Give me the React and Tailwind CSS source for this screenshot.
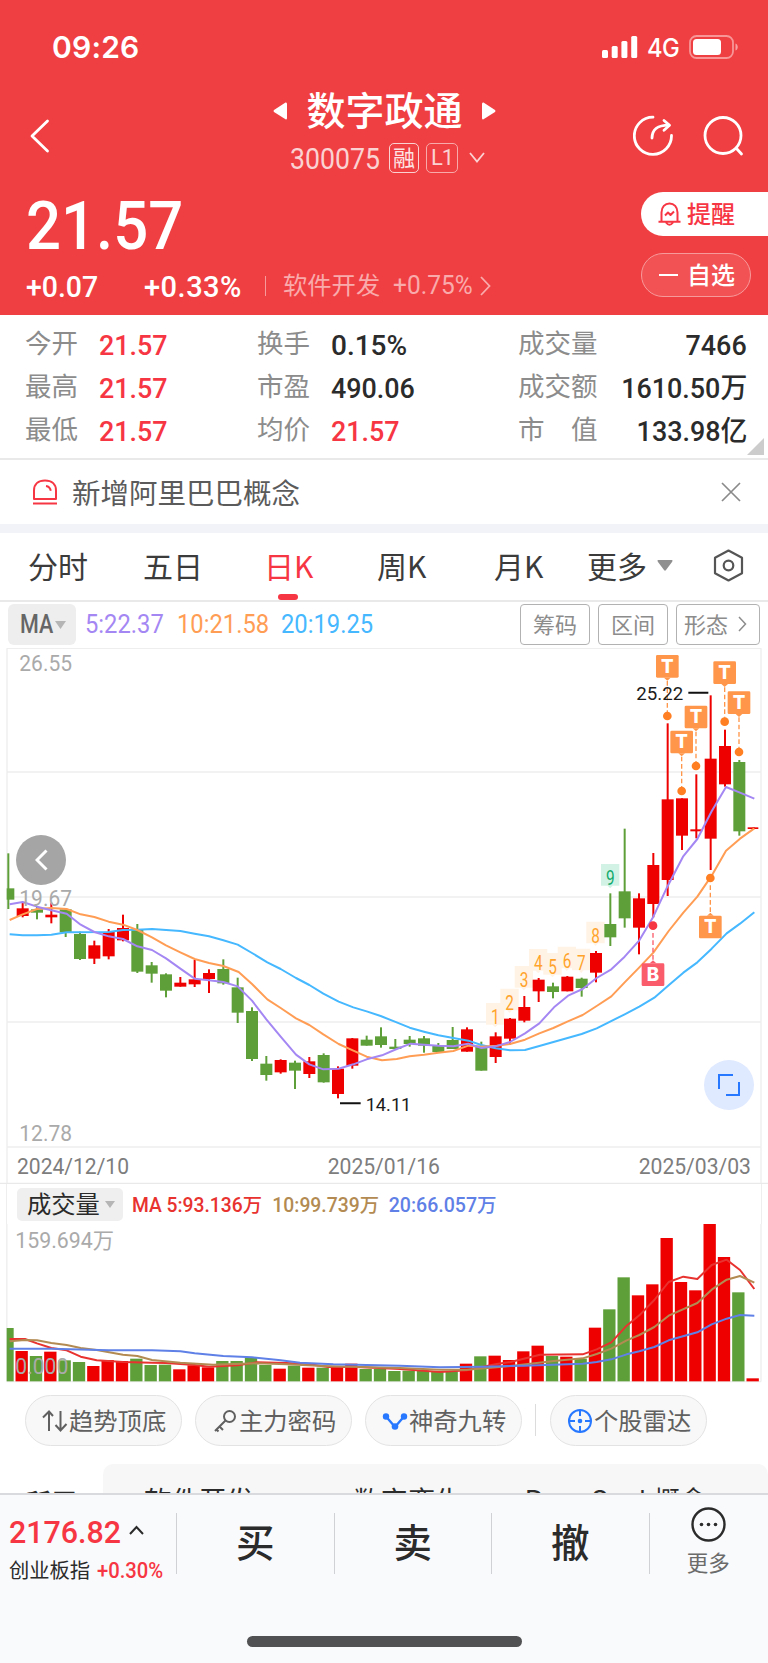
import React from 'react';

// [high, top, bottom, low, up?] of every day, three units are one pixel
const candles = [
  [-80, 25, 59, 87, 0], [68, 85, 108, 112, 1], [80, 88, 98, 118, 0], [68, 104, 112, 130, 1],
  [86, 88, 157, 171, 0], [155, 162, 237, 240, 0], [182, 196, 236, 252, 1], [147, 156, 229, 238, 1],
  [104, 144, 181, 184, 1], [132, 150, 275, 279, 0], [246, 256, 281, 308, 0], [280, 283, 332, 352, 0],
  [291, 308, 320, 320, 1], [240, 298, 313, 321, 1], [268, 279, 297, 339, 1], [238, 267, 310, 314, 0],
  [293, 322, 398, 429, 0], [382, 393, 537, 543, 0], [528, 551, 585, 602, 0], [538, 540, 577, 581, 1],
  [542, 548, 572, 627, 0], [531, 544, 582, 594, 1], [520, 525, 607, 608, 0], [559, 566, 642, 655, 1],
  [474, 475, 557, 566, 1], [467, 479, 497, 497, 0], [442, 469, 495, 503, 0], [477, 500, 507, 507, 0],
  [468, 479, 492, 500, 0], [468, 475, 497, 518, 0], [489, 496, 516, 516, 0], [441, 480, 507, 507, 0],
  [442, 448, 515, 515, 1], [485, 497, 572, 572, 0], [457, 469, 531, 549, 1], [414, 416, 476, 494, 1],
  [348, 381, 422, 427, 1], [294, 299, 334, 366, 1], [308, 319, 336, 355, 0], [288, 290, 334, 334, 1],
  [293, 296, 324, 350, 0], [213, 219, 278, 307, 1], [40, 132, 172, 198, 0], [-154, 34, 115, 143, 0],
  [40, 55, 143, 223, 1], [-81, -45, 72, 112, 1], [-470, -242, 0, 48, 1], [-245, -245, -133, -90, 1],
  [-317, -152, -146, -125, 1], [-554, -364, -124, -30, 1], [-451, -402, -287, -280, 1], [-360, -354, -146, -133, 0],
  [-158, -158, -153, -153, 1],
];

const volumes = [
  444, 513, 528, 515, 541, 546, 558, 540, 543, 536, 555, 554, 568, 556, 562, 543, 543, 534, 555, 566, 557, 563, 563, 564, 551, 567, 567,
  573, 572, 572, 576, 574, 551, 529, 527, 540, 514, 497, 528, 530, 536, 443, 388, 292, 346, 313, 174, 306, 331, 129, 231, 337, 595,
];

const maLines = [
  ['#45b8ff', '29,163 68,166 111,166 154,164 200,157 326,156 369,150 412,149 456,147 541,153 584,161 627,169 670,181 713,194 756,219 802,247 842,267 888,294 928,315 970,341 1016,365 1060,382 1100,394 1142,408 1190,427 1229,443 1272,455 1315,466 1360,474 1405,482 1444,495 1487,505 1530,511 1575,510 1618,498 1745,462 1790,445 1874,403 1918,380 1963,353 2006,316 2050,278 2092,247 2135,206 2180,160 2220,131 2263,97'],
  ['#ff9d55', '29,120 68,103 111,87 154,84 200,87 242,103 283,111 326,125 369,134 412,150 456,172 498,196 541,217 584,237 627,249 670,258 716,276 756,312 802,358 842,384 888,415 928,435 970,463 1016,492 1060,512 1100,530 1146,541 1190,537 1229,529 1272,524 1315,518 1360,513 1405,497 1444,500 1490,497 1530,492 1575,479 1618,460 1660,444 1702,425 1748,405 1790,378 1834,349 1874,307 1918,262 1960,218 2006,153 2050,98 2092,50 2135,-13 2178,-88 2220,-124 2263,-155'],
  ['#a487f3', '29,73 68,66 111,80 154,91 200,101 242,134 283,156 326,169 369,177 412,199 456,210 498,235 541,266 584,296 627,301 670,306 713,319 756,362 799,418 842,470 888,524 928,553 970,568 1016,566 1060,553 1100,538 1146,526 1190,507 1232,491 1272,494 1315,497 1360,499 1405,491 1444,504 1487,499 1530,486 1575,460 1618,430 1662,382 1706,346 1748,327 1790,294 1834,268 1874,230 1918,181 1960,110 2002,20 2049,-70 2092,-123 2135,-206 2178,-279 2220,-262 2263,-244'],
];

const volumeLines = [
  ['#e8322f', '29,477 75,477 111,490 154,504 200,511 242,530 290,541 369,546 456,548 498,549 584,555 627,560 713,556 770,547 860,549 928,553 985,561 1070,561 1200,567 1320,576 1400,571 1490,552 1532,546 1620,524 1748,523 1790,508 1834,487 1880,437 1918,406 1963,360 2006,306 2050,290 2092,297 2135,255 2180,239 2220,270 2263,327'],
  ['#b38b52', '29,484 75,480 111,481 154,489 200,495 242,504 290,510 369,524 412,528 456,540 541,548 640,554 770,550 860,553 970,558 1200,564 1320,569 1400,569 1490,562 1532,558 1662,543 1748,535 1790,522 1834,506 1880,481 1918,465 1963,441 2006,407 2092,369 2135,329 2180,299 2220,288 2263,308'],
  ['#5f80e6', '29,506 154,506 326,511 456,511 541,514 584,520 670,528 756,532 842,541 900,548 1000,553 1200,557 1320,562 1450,560 1570,557 1748,551 1790,546 1834,538 1880,523 1918,514 1963,501 2006,481 2092,457 2135,433 2180,416 2220,405 2263,407'],
];

// x, top of the tag, dot
const tags = [
  [2002, -675, -492, 'T'], [2174, -656, -475, 'T'], [2217, -566, -384, 'T'], [2088, -523, -342, 'T'],
  [2045, -448, -267, 'T'], [2131, 107, -6, 'T'], [1959, 250, 137, 'B'],
];

// nine-turn counter
const turns = [
  [1486, 369], [1529, 326], [1572, 258], [1615, 207], [1658, 219], [1701, 200], [1744, 206], [1787, 125], [1831, -48],
];

const stats = [
  ['今开', '21.57', 'text-[#f73643]', '换手', '0.15%', 'text-[#2b2b2b]', '成交量', '7466'],
  ['最高', '21.57', 'text-[#f73643]', '市盈', '490.06', 'text-[#2b2b2b]', '成交额', '1610.50万'],
  ['最低', '21.57', 'text-[#f73643]', '均价', '21.57', 'text-[#f73643]', '市　值', '133.98亿'],
];

const num = "font-['Roboto','Noto_Sans_CJK_SC',sans-serif] whitespace-nowrap ";

const Label = ({ x, y, size, width, fill, children, weight = 400 }) => (
  <text x={x} y={y} fontSize={size} textLength={width} lengthAdjust="spacingAndGlyphs" fill={fill} fontWeight={weight}
    fontFamily="Roboto, 'Noto Sans CJK SC', sans-serif">{children}</text>
);

const Header = () => (
  <header className="h-[315px] bg-[#f03f42] text-white">
    <div className="flex h-[94px] items-center pl-[52px] pr-[29px]">
      <span className="font-['Inter',sans-serif] text-[30px] font-semibold leading-none tracking-[0.2px]">09:26</span>
      <svg className="ml-auto" width="36" height="22" viewBox="0 0 36 22" fill="white">
        <rect x="0" y="14" width="6" height="8" rx="1.5" />
        <rect x="9.7" y="10" width="6" height="12" rx="1.5" />
        <rect x="19.4" y="5" width="6" height="17" rx="1.5" />
        <rect x="29.2" y="0" width="6" height="22" rx="1.5" />
      </svg>
      <span className="ml-[9px] w-[42px] origin-left scale-x-95 pt-[2px] font-['Inter',sans-serif] text-[25px] font-medium leading-none tracking-[-0.5px]">4G</span>
      <svg width="50" height="24" viewBox="0 0 50 24" fill="none">
        <rect x="1" y="1" width="43" height="22" rx="6.5" stroke="white" strokeOpacity=".45" strokeWidth="1.8" />
        <rect x="4" y="4" width="28" height="16" rx="3.5" fill="white" />
        <path d="M46.5 8.5c3 1 3 6 0 7z" fill="white" fillOpacity=".5" />
      </svg>
    </div>
    <div className="flex h-[84px] items-start">
      <svg className="ml-[29px] mt-[25px]" width="22" height="34" viewBox="0 0 22 34" fill="none" stroke="white" strokeWidth="2.8" strokeLinecap="round" strokeLinejoin="round">
        <path d="M18.500 2 3 17l15.500 15" />
      </svg>
      <div className="ml-[222px] flex w-[223px] flex-col">
        <div className="-mt-[5px] flex h-[44px] items-center justify-between">
          <svg width="14" height="18" viewBox="0 0 14 18" fill="white"><path d="M12.500 .5Q14 0 14 2v14q0 2-1.500 1.200L1 10Q0 9 1 8z" /></svg>
          <h1 className="-mt-[6px] text-[39px] font-medium leading-none">数字政通</h1>
          <svg width="14" height="18" viewBox="0 0 14 18" fill="white"><path d="M1.500 .5Q0 0 0 2v14q0 2 1.500 1.200L13 10Q14 9 13 8z" /></svg>
        </div>
        <div className="mt-[9px] flex h-[31px] items-center pl-[17px]">
          <span className={num + 'w-[99px] origin-left scale-x-92 pt-[4px] text-[29px] leading-none text-[#fbd2d2]'}>300075</span>
          <span className="flex h-[30px] w-[30px] items-center justify-center rounded-[5px] border-[1.5px] border-[#fbd2d2] text-[22px] leading-none text-[#fde3e3]"><span className="-mt-[3px]">融</span></span>
          <span className="ml-[7px] flex h-[30px] w-[32px] items-center justify-center rounded-[5px] border-[1.5px] border-[#f8a9a9] font-['Roboto'] text-[22px] leading-none tracking-[-1px] text-[#fbd2d2]">L1</span>
          <svg className="ml-[11px]" width="16" height="11" viewBox="0 0 16 11" fill="none" stroke="#fbd2d2" strokeWidth="1.8"><path d="m1 1 7 8.500L15 1" /></svg>
        </div>
      </div>
      <svg className="ml-auto mt-[21px]" width="42" height="42" viewBox="0 0 42 42" fill="none" stroke="white" strokeWidth="2.800" strokeLinecap="round" strokeLinejoin="round">
        <path d="M20 2.200A18.600 18.600 0 1 0 38.500 20.500" />
        <path d="M19 23c.2-8 4-12.800 17-12.800" />
        <path d="m31 5.500 5.500 4.800-5.500 5" />
      </svg>
      <svg className="ml-[28px] mr-[23px] mt-[21px]" width="42" height="42" viewBox="0 0 42 42" fill="none" stroke="white" strokeWidth="2.800" strokeLinecap="round">
        <circle cx="20" cy="20.500" r="18" />
        <path d="m33.500 33.500 5 5.500" />
      </svg>
    </div>
    <div className="flex h-[137px]">
      <div className="pl-[26px] pt-[14px]">
        <div className={num + 'h-[68px] w-[170px] origin-left scale-x-92 text-[67px] font-medium leading-[68px]'}>21.57</div>
        <div className="mt-[9px] flex h-[34px] items-center">
          <span className={num + 'w-[118px] origin-left scale-x-98 pt-[3px] text-[29px] font-medium'}>+0.07</span>
          <span className={num + 'w-[121px] pt-[3px] text-[29px] font-medium tracking-[0.5px]'}>+0.33%</span>
          <span className="h-[20px] w-px bg-[#f79a9b]" />
          <span className="-mt-[3px] ml-[17px] text-[24.300px] text-[#f9abac]">软件开发</span>
          <span className={num + 'ml-[13px] w-[87px] origin-left scale-x-98 text-[25px] text-[#f9abac]'}>+0.75%</span>
          <svg width="11" height="20" viewBox="0 0 11 20" fill="none" stroke="#f9abac" strokeWidth="1.800"><path d="m1 1 8.500 9L1 19" /></svg>
        </div>
      </div>
      <div className="ml-auto flex w-[127px] flex-col pt-[14px]">
        <div className="flex h-[44px] items-center rounded-l-full bg-white pl-[17px] text-[#f73643]">
          <svg width="23" height="25" viewBox="0 0 23 25" fill="none" stroke="#f73643" strokeWidth="2" strokeLinejoin="round">
            <path d="M3.500 19.500V10.500C3.500 5 7 1.500 11.500 1.500S19.500 5 19.500 10.500v9" />
            <path d="M.5 19.700h22M8 20.500q3.500 4.500 7 0M7 13.500l3-3 2.500 2.500 3.500-3.500" />
          </svg>
          <span className="-mt-[2px] ml-[6px] text-[24px] font-medium">提醒</span>
        </div>
        <div className="mt-[17px] flex h-[44px] w-[110px] items-center rounded-full border-[1.5px] border-[#f79a9b] bg-[#f25254] pl-[17px]">
          <span className="h-[2px] w-[19px] bg-white" />
          <span className="-mt-[2px] ml-[9px] text-[24px] font-medium">自选</span>
        </div>
      </div>
    </div>
  </header>
);

const Stats = () => (
  <section className="flex h-[145px] flex-col border-b-2 border-[#e9e9e9] pt-[7px]">
    {stats.map((row, ind) => (
      <div key={ind} className="flex h-[43px] items-center text-[26.500px] text-[#8c8c8c]">
        <span className="-mt-[3px] ml-[25px] w-[74px]">{row[0]}</span>
        <span className={num + 'w-[158px] origin-left scale-x-96 pt-[4px] text-[28px] font-medium ' + row[2]}>{row[1]}</span>
        <span className="-mt-[3px] w-[74px]">{row[3]}</span>
        <span className={num + 'w-[187px] origin-left pt-[4px] text-[28px] font-medium ' + (ind === 0 ? '' : 'scale-x-96 ') + row[5]}>{row[4]}</span>
        <span className="-mt-[3px]">{row[6]}</span>
        <span className={num + 'ml-auto mr-[21px] origin-right scale-x-96 pt-[4px] text-[28px] font-medium text-[#2b2b2b]'}>{row[7]}</span>
      </div>
    ))}
    <svg className="-mt-[13px] ml-auto mr-[4px]" width="17" height="17" viewBox="0 0 17 17" fill="#ccc"><path d="M17 0v17H0z" /></svg>
  </section>
);

const Notice = () => (
  <section className="flex h-[64px] items-center pl-[32px] pr-[27px]">
    <svg width="26" height="26" viewBox="0 0 26 26" fill="none" stroke="#f73643" strokeWidth="2">
      <path d="M2 20V11.500C2 5 6.500 1.500 13 1.500S24 5 24 11.500V20z" strokeLinejoin="round" />
      <path d="M1 24.500h24M14 7q4 .5 4.800 4.800" />
    </svg>
    <span className="ml-[14px] text-[28.500px] text-[#5b5b5b]">新增阿里巴巴概念</span>
    <svg className="ml-auto" width="20" height="20" viewBox="0 0 20 20" stroke="#8a8a8a" strokeWidth="1.700"><path d="m1 1 18 18M19 1 1 19" /></svg>
  </section>
);

const Tabs = () => (
  <nav className="flex h-[69px] items-center border-b-2 border-[#e9e9e9] pb-[3px] text-[30px] text-[#3b3b3b]">
    <span className="ml-[28px] w-[115px]">分时</span>
    <span className="w-[121px]">五日</span>
    <span className="relative w-[113px] text-[#f73643]">
      日K
      <i className="absolute left-[14px] top-[51px] h-[6px] w-[20px] rounded-[3px] bg-[#f73643]" />
    </span>
    <span className="w-[117px]">周K</span>
    <span className="w-[93px]">月K</span>
    <span className="w-[70px]">更多</span>
    <svg width="16" height="11" viewBox="0 0 16 11" fill="#8f8f8f"><path d="M1 0h14q1 .5 0 2L9 10q-1 1.500-2 0L1 2Q0 .5 1 0" /></svg>
    <svg className="ml-auto mr-[24px]" width="31" height="33" viewBox="0 0 31 33" fill="none" stroke="#555" strokeWidth="2.200" strokeLinejoin="round">
      <path d="M15.500 1.500 29 8.700v15.600l-13.500 7.200L2 24.300V8.700z" />
      <circle cx="15.500" cy="16.500" r="4.800" />
    </svg>
  </nav>
);

const KLine = () => (
  <section>
    <div className="flex h-[46px] items-start pl-[8px] pr-[8px] pt-[2px]">
      <span className="flex h-[41px] w-[68px] items-center rounded-[6px] bg-[#eee] pl-[12px] text-[#666]">
        <span className={num + 'w-[35px] origin-left scale-x-86 text-[25px] font-medium'}>MA</span>
        <svg width="11" height="8" viewBox="0 0 11 8" fill="#b5b5b5"><path d="M0 0h11L5.500 8z" /></svg>
      </span>
      <span className={num + 'ml-[9px] w-[92px] origin-left scale-x-95 text-[25px] leading-[42px] text-[#a487f3]'}>5:22.37</span>
      <span className={num + 'w-[104px] origin-left scale-x-95 text-[25px] leading-[42px] text-[#ff9d55]'}>10:21.58</span>
      <span className={num + 'origin-left scale-x-95 text-[25px] leading-[42px] text-[#45b8ff]'}>20:19.25</span>
      <div className="ml-auto flex gap-[8px] text-[22px] text-[#8c8c8c]">
        <span className="flex h-[41px] w-[70px] items-center justify-center rounded-[4px] border-[1.500px] border-[#b2b2b2] pb-[3px]">筹码</span>
        <span className="flex h-[41px] w-[70px] items-center justify-center rounded-[4px] border-[1.500px] border-[#b2b2b2] pb-[3px]">区间</span>
        <span className="flex h-[41px] w-[84px] items-center rounded-[4px] border-[1.500px] border-[#b2b2b2] pb-[3px] pl-[7px]">
          形态
          <svg className="ml-[10px] mt-[2px]" width="9" height="16" viewBox="0 0 9 16" fill="none" stroke="#8c8c8c" strokeWidth="1.500"><path d="m1 1 6.500 7L1 15" /></svg>
        </span>
      </div>
    </div>
    <div className="relative h-[536px]">
      <svg width="768" height="536" viewBox="0 -696 2304 1608">
        <path d="M20-695H2284M20-324H2284M20 51H2284M20 426H2284M20 801H2284M21-695V912M2283-695V912" stroke="#eee" strokeWidth="4" fill="none" />
        <path d="M0 910H2304" stroke="#e9e9e9" strokeWidth="4" />
        {turns.map(([x, y], ind) => (
          <g key={ind}>
            <path d={`M${x - 28} ${y}h55v65h-20l-7.500 8-7.500-8h-20z`} fill={ind === 8 ? '#d3f2e6' : '#fff3e6'} />
            <Label x={x - 13} y={y + 63} size={58} width={26} fill={ind === 8 ? '#12ab6c' : '#ffa32b'}>{ind + 1}</Label>
          </g>
        ))}
        {candles.map(([high, top, bottom, low, up], ind) => {
          const x = 25 + ind * 43;
          const left = ind === 0 ? 20 : x - 18;
          return (
            <g key={ind} fill={up ? '#ee0000' : '#5f9f3a'}>
              <rect x={ind === 0 ? 22 : x - 3} y={high} width="6" height={low - high} />
              <rect x={left} y={top} width={ind === 0 ? 23 : ind === 52 ? 32 : 36} height={bottom - top} />
            </g>
          );
        })}
        {maLines.map(([color, points]) => (
          <polyline key={color} points={points} fill="none" stroke={color} strokeWidth="6" strokeLinejoin="round" />
        ))}
        {tags.map(([x, y, dot, name]) => {
          const below = y > dot;
          const color = name === 'B' ? '#fa5c6b' : '#ff9649';
          return (
            <g key={x}>
              <path d={below ? `M${x} ${dot + 22}V${y - 8}` : `M${x} ${y + 78}V${dot - 12}`} stroke={color} strokeWidth="4" strokeDasharray="14 8" />
              <circle cx={x} cy={dot} r="13" fill={name === 'B' ? '#f73643' : '#ff7f22'} />
              <rect x={x - 34} y={y} width="68" height="68" rx="4" fill={color} />
              <path d={below ? `M${x - 10} ${y}l10-9 10 9z` : `M${x - 10} ${y + 68}l10 9 10-9z`} fill={color} />
              <text x={x} y={y + 53} textAnchor="middle" fontSize="56" fontWeight="800" fill="white" fontFamily="Inter, sans-serif">{name}</text>
            </g>
          );
        })}
        <path d="M2065-562h60M1020 670h62" stroke="#111" strokeWidth="6" />
        <Label x={1909} y={-541} size={57} width={141} fill="#1c1c1c">25.22</Label>
        <Label x={1097} y={694} size={57} width={137} fill="#1c1c1c">14.11</Label>
        <Label x={58} y={-628} size={66} width={158} fill="#aaa">26.55</Label>
        <Label x={58} y={78} size={66} width={158} fill="#aaa">19.67</Label>
        <Label x={58} y={783} size={66} width={158} fill="#aaa">12.78</Label>
        <Label x={51} y={881} size={66} width={336} fill="#7d7d7d">2024/12/10</Label>
        <Label x={983} y={881} size={66} width={337} fill="#7d7d7d">2025/01/16</Label>
        <Label x={1916} y={881} size={66} width={337} fill="#7d7d7d">2025/03/03</Label>
      </svg>
      <button className="absolute left-[16px] top-[187px] flex h-[50px] w-[50px] items-center justify-center rounded-full bg-[#a5a5a5]">
        <svg width="13" height="22" viewBox="0 0 13 22" fill="none" stroke="white" strokeWidth="3"><path d="M11.500 1.500 2 11l9.500 9.500" /></svg>
      </button>
      <button className="absolute left-[704px] top-[412px] flex h-[50px] w-[50px] items-center justify-center rounded-full bg-[#dfe9ff]">
        <svg width="22" height="22" viewBox="0 0 22 22" fill="none" stroke="#2878ff" strokeWidth="2"><path d="M1 15V1h14M21 8v13H8" /></svg>
      </button>
    </div>
  </section>
);

const Volume = () => (
  <section className="h-[200px]">
    <div className="mx-[6px] flex h-[40px] items-center border-x-[1.500px] border-[#eee] pl-[10px]">
      <span className="flex h-[33px] w-[106px] items-center rounded-[5px] bg-[#efefef] pb-[2px] pl-[10px] text-[24.300px] text-[#2b2b2b]">
        成交量
        <svg className="ml-[5px] mt-[2px]" width="10" height="7" viewBox="0 0 10 7" fill="#b5b5b5"><path d="M0 0h10L5 7z" /></svg>
      </span>
      <svg className="ml-[8px]" width="370" height="34" viewBox="0 0 1110 102">
        <Label x={3} y={74} size={59} width={390} weight={500} fill="#e8322f">MA 5:93.136万</Label>
        <Label x={424} y={74} size={59} width={320} weight={500} fill="#b38b52">10:99.739万</Label>
        <Label x={773} y={74} size={59} width={324} weight={500} fill="#5f80e6">20:66.057万</Label>
      </svg>
    </div>
    <svg width="768" height="160" viewBox="0 132 2304 480">
      <path d="M20.500 132V604M2283 132V604M20 605H2284" stroke="#eee" strokeWidth="4" />
      {volumes.map((top, ind) => (
        <rect key={ind} x={ind === 0 ? 20 : 3.5 + ind * 43} y={top} width={ind === 0 ? 21 : 37} height={604 - top} fill={candles[ind][4] ? '#ee0000' : '#5f9f3a'} />
      ))}
      {volumeLines.map(([color, points]) => (
        <polyline key={color} points={points} fill="none" stroke={color} strokeWidth="6" strokeLinejoin="round" />
      ))}
      <Label x={46} y={204} size={66} width={296} fill="#aaa">159.694万</Label>
      <Label x={46} y={581} size={66} width={159} fill="#aaa">0.000</Label>
    </svg>
  </section>
);

const Chip = ({ icon, children }) => (
  <span className="flex h-[51px] w-[157px] items-center rounded-full border border-[#e3e3e3] bg-[#f8f8f8] pl-[16px] text-[24.300px] text-[#606060]">
    <svg width="26" height="26" viewBox="0 0 26 26" fill="none" className="mr-[1px] shrink-0">{icon}</svg>
    <span className="whitespace-nowrap">{children}</span>
  </span>
);

const Tools = () => (
  <section className="flex h-[80px] items-start pl-[25px] pt-[11px]">
    <div className="flex gap-[13px]">
      <Chip icon={<path d="M7 23V4M1 9.500 7 3.500l4 4.500M18.500 3v19M13.500 17l5 5.500 6-6.500" stroke="#606060" strokeWidth="2" />}>趋势顶底</Chip>
      <Chip icon={<g stroke="#606060" strokeWidth="2"><circle cx="17.500" cy="8.500" r="5.500" /><path d="M13.500 12.500 3 23M7.500 18.500l3.500 3.500M4.500 21.500l2 2" /></g>}>主力密码</Chip>
      <Chip icon={<g fill="#2878ff"><path d="M4 8.500 13 19 22 8.500" stroke="#2878ff" strokeWidth="2.400" fill="none" /><circle cx="4" cy="8.500" r="3.200" /><circle cx="22" cy="8.500" r="3.200" /><circle cx="13" cy="18.500" r="3.300" /></g>}>神奇九转</Chip>
    </div>
    <span className="ml-[13px] mr-[14px] mt-[9px] h-[32px] w-px bg-[#dcdcdc]" />
    <Chip icon={<g stroke="#2878ff" strokeWidth="2"><circle cx="13" cy="13" r="11" /><path d="M13 1.500v6.500M13 18v6.500M1.500 13H8M18 13h6.500" /><circle cx="13" cy="13" r="2.300" fill="#2878ff" stroke="none" /></g>}>个股雷达</Chip>
  </section>
);

const Plates = () => (
  <section className="flex h-[29px] overflow-hidden text-[27.500px] leading-[40px] text-[#2b2b2b]">
    <span className="w-[103px] pl-[25px] pt-[18px] text-[26px] font-bold">所属</span>
    <div className="flex h-[60px] flex-1 rounded-tl-[10px] rounded-tr-[10px] bg-[#f7f7f7] pt-[15px]">
      <span className="ml-[41px] w-[209px]">软件开发</span>
      <span className="w-[172px]">数字孪生</span>
      <span className="whitespace-nowrap pt-[1px] font-['Inter','Noto_Sans_CJK_SC',sans-serif] text-[26.500px]">DeepSeek概念</span>
    </div>
  </section>
);

const BottomBar = () => (
  <footer className="flex h-[170px] flex-col border-t-2 border-[#d9dadd] bg-[#f9fafc]">
    <div className="flex h-[100px]">
      <div className="w-[176px] pl-[9px] pt-[17px]">
        <div className="flex h-[40px] items-center">
          <span className={num + 'w-[120px] origin-left scale-x-95 text-[32px] font-medium text-[#f73643]'}>2176.82</span>
          <svg className="-mt-[4px]" width="15" height="10" viewBox="0 0 15 10" fill="none" stroke="#2b2b2b" strokeWidth="2"><path d="m1 9 6.500-7L14 9" /></svg>
        </div>
        <div className="flex h-[36px] items-center text-[20.300px] text-[#2b2b2b]">
          <span className="-mt-[2px] w-[88px] whitespace-nowrap">创业板指</span>
          <span className={num + 'origin-left scale-x-92 text-[22px] font-medium text-[#f73643]'}>+0.30%</span>
        </div>
      </div>
      {['买', '卖', '撤'].map((name) => (
        <div key={name} className="mt-[18px] flex h-[61px] w-[157.500px] items-center justify-center border-l border-[#d0d1d4] pb-[6px] text-[38.500px] font-medium text-[#2b2b2b]">{name}</div>
      ))}
      <div className="mt-[18px] h-[61px] w-px bg-[#d0d1d4]" />
      <div className="flex flex-1 flex-col items-center pt-[12px] pr-[1px]">
        <svg width="35" height="35" viewBox="0 0 35 35" fill="#2b2b2b">
          <circle cx="17.500" cy="17.500" r="16" fill="none" stroke="#2b2b2b" strokeWidth="2.400" />
          <circle cx="10.500" cy="17.500" r="1.800" /><circle cx="17.500" cy="17.500" r="1.800" /><circle cx="24.500" cy="17.500" r="1.800" />
        </svg>
        <span className="mt-[3px] text-[21.500px] leading-[34px] text-[#6b6b6b]">更多</span>
      </div>
    </div>
    <div className="ml-[247px] mt-[41px] h-[11px] w-[275px] rounded-full bg-[#515153]" />
  </footer>
);

export default function App() {
  return (
    <div className="h-[1663px] w-[768px] overflow-hidden bg-white font-['Noto_Sans_CJK_SC',sans-serif]">
      <Header />
      <Stats />
      <Notice />
      <div className="h-[9px] bg-[#f2f3f8]" />
      <Tabs />
      <KLine />
      <Volume />
      <Tools />
      <Plates />
      <BottomBar />
    </div>
  );
}
